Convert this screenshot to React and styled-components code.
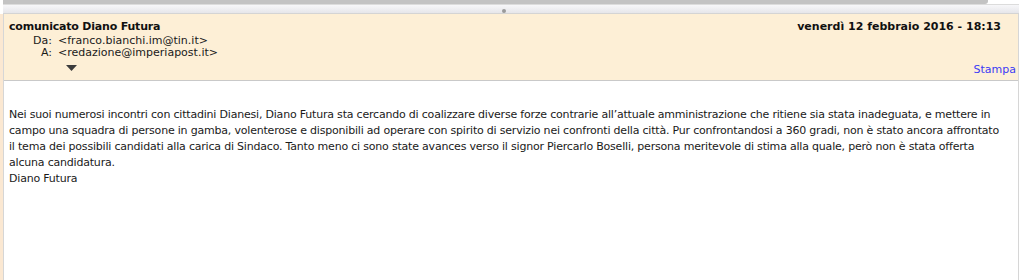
import React from "react";
import styled, { createGlobalStyle } from "styled-components";

const GlobalStyle = createGlobalStyle`
  html, body {
    margin: 0;
    padding: 0;
    background: #ffffff;
  }
  body {
    font-family: "DejaVu Sans", Verdana, sans-serif;
    color: #111;
  }
`;

export default function App() {
  return (
    <>
      <GlobalStyle />
      <Frame>
        <TopTrack>
          <TrackThumb />
        </TopTrack>
        <Splitter>
          <Grip />
        </Splitter>
        <Pane>
          <Header>
            <HeaderRow>
              <Subject>comunicato Diano Futura</Subject>
              <DateText>venerdì 12 febbraio 2016 - 18:13</DateText>
            </HeaderRow>
            <AddressRow>
              <Label>Da:</Label>
              <Address>&lt;franco.bianchi.im@tin.it&gt;</Address>
            </AddressRow>
            <AddressRow>
              <Label>A:</Label>
              <Address>&lt;redazione@imperiapost.it&gt;</Address>
            </AddressRow>
            <HeaderFoot>
              <Toggle>
                <svg width="11" height="6" viewBox="0 0 11 6">
                  <path d="M0 0 H11 L5.5 6 Z" fill="#3c3c3c" />
                </svg>
              </Toggle>
              <PrintLink>Stampa</PrintLink>
            </HeaderFoot>
          </Header>
          <Body>
            <p>
              Nei suoi numerosi incontri con cittadini Dianesi, Diano Futura sta cercando di coalizzare diverse forze contrarie all’attuale amministrazione che ritiene sia stata inadeguata, e mettere in campo una squadra di persone in gamba, volenterose e disponibili ad operare con spirito di servizio nei confronti della città. Pur confrontandosi a 360 gradi, non è stato ancora affrontato il tema dei possibili candidati alla carica di Sindaco. Tanto meno ci sono state avances verso il signor Piercarlo Boselli, persona meritevole di stima alla quale, però non è stata offerta alcuna candidatura.
            </p>
            <p>Diano Futura</p>
          </Body>
        </Pane>
      </Frame>
    </>
  );
}

const Frame = styled.div`
  width: 1024px;
  height: 280px;
  display: flex;
  flex-direction: column;
  overflow: hidden;
`;

const TopTrack = styled.div`
  height: 4px;
  background: #ffffff;
  display: flex;
  padding-left: 3px;
`;

const TrackThumb = styled.div`
  width: 985px;
  height: 4px;
  background: #c3c3c3;
  border-radius: 0 0 3px 0;
`;

const Splitter = styled.div`
  height: 10px;
  margin-left: 3px;
  margin-right: 5px;
  background: linear-gradient(#f7f7f9, #e6e6ea);
  border-top: 1px solid #dcdcdc;
  border-bottom: 1px solid #d4d4d4;
  box-sizing: border-box;
  display: flex;
  align-items: center;
  justify-content: center;
`;

const Grip = styled.div`
  width: 4px;
  height: 4px;
  margin: 3px 14px 0 0;
  border-radius: 50%;
  background: #9a9a9a;
`;

const Pane = styled.div`
  flex: 1;
  display: flex;
  flex-direction: column;
  margin-left: 3px;
  margin-right: 5px;
  border-left: 1px solid #d6d6d6;
  border-right: 1px solid #d6d6d6;
  box-shadow: -3px 0 0 #fbe8d2;
`;

const Header = styled.div`
  height: 67px;
  box-sizing: border-box;
  background: #fdefd6;
  border-bottom: 1px solid #c9c9c9;
  padding: 6px 2px 0 5px;
  display: flex;
  flex-direction: column;
`;

const HeaderRow = styled.div`
  display: flex;
  justify-content: space-between;
  align-items: baseline;
  padding-right: 15px;
  height: 14px;
`;

const Subject = styled.span`
  font-size: 11px;
  font-weight: bold;
  letter-spacing: -0.2px;
`;

const DateText = styled.span`
  font-size: 11px;
  font-weight: bold;
`;

const AddressRow = styled.div`
  display: flex;
  align-items: baseline;
  height: 12px;
  font-size: 11px;
  color: #1a1a1a;
`;

const Label = styled.span`
  width: 43px;
  text-align: right;
`;

const Address = styled.span`
  margin-left: 6px;
`;

const HeaderFoot = styled.div`
  display: flex;
  justify-content: space-between;
  align-items: flex-end;
  margin-top: 5px;
`;

const Toggle = styled.span`
  margin-left: 57px;
  display: flex;
  padding-bottom: 7px;
`;

const PrintLink = styled.a`
  font-size: 11px;
  color: #3b3bf5;
  cursor: pointer;
  padding-bottom: 2px;
`;

const Body = styled.div`
  flex: 1;
  background: #ffffff;
  padding: 26px 14px 0 5px;
  font-size: 11px;
  line-height: 16px;
  letter-spacing: -0.2px;
  color: #1a1a1a;

  p {
    margin: 0;
  }
`;
